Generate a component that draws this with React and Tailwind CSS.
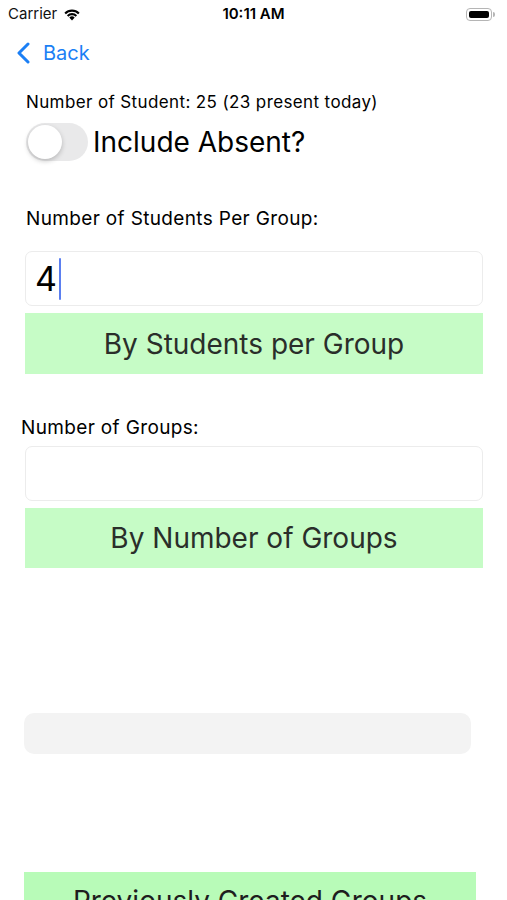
import React from "react";

function Wifi() {
  return (
    <svg width="18" height="13" viewBox="0 0 18 13" className="ml-[6px]">
      <path d="M9 12.5 L6.3 9.6 A3.9 3.9 0 0 1 11.7 9.6 Z" fill="#000" />
      <path d="M3.9 7.2 A7.3 7.3 0 0 1 14.1 7.2 L12.6 8.7 A5.2 5.2 0 0 0 5.4 8.7 Z" fill="#000" />
      <path d="M1.4 4.7 A10.8 10.8 0 0 1 16.6 4.7 L15.1 6.2 A8.7 8.7 0 0 0 2.9 6.2 Z" fill="#000" />
    </svg>
  );
}

function Battery() {
  return (
    <div className="flex items-center">
      <div className="w-[26px] h-[13px] rounded-[4px] border border-[#b5b5b5] p-[2px]">
        <div className="w-full h-full rounded-[2px] bg-black" />
      </div>
      <div className="w-[2px] h-[5px] rounded-r-sm bg-[#b5b5b5] ml-px" />
    </div>
  );
}

export default function App() {
  return (
    <div
      className="w-[507px] h-[900px] bg-white overflow-hidden text-black"
      style={{ fontFamily: "Inter, 'Liberation Sans', sans-serif" }}
    >
      <div className="grid grid-cols-3 items-center h-[28px] px-[8px] leading-[20px]">
        <div className="flex items-center text-[15px] text-[#111]">
          Carrier
          <Wifi />
        </div>
        <div className="text-center text-[15px] font-semibold">10:11 AM</div>
        <div className="flex justify-end pr-[4px]">
          <Battery />
        </div>
      </div>

      <div className="flex items-center h-[50px] pl-[16px] text-[#1b7ff5]">
        <svg width="14" height="22" viewBox="0 0 14 22">
          <path d="M12 2 L3 11 L12 20" stroke="#1b7ff5" strokeWidth="3" fill="none" strokeLinecap="round" strokeLinejoin="round" />
        </svg>
        <span className="ml-[13px] text-[20px]">Back</span>
      </div>

      <div className="flex flex-col pl-[25px] pr-[24px]">
        <div className="mt-[14px] ml-px text-[17px] tracking-[0.38px] leading-[20px]">
          Number of Student: 25 (23 present today)
        </div>
        <div className="mt-[11px] flex items-center h-[38px] shrink-0">
          <div className="w-[62px] h-[38px] rounded-full bg-[#e9e9ea] p-[2px] ml-px">
            <div className="w-[34px] h-[34px] rounded-full bg-white shadow-[0_2px_5px_rgba(0,0,0,0.22)]" />
          </div>
          <span className="ml-[5px] text-[28px] leading-[34px]">Include Absent?</span>
        </div>

        <div className="mt-[47px] ml-px text-[19px] tracking-[0.35px] leading-[22px]">
          Number of Students Per Group:
        </div>
        <div className="mt-[21px] h-[55px] shrink-0 rounded-[7px] border border-[#ececec] flex items-center pl-[9px]">
          <span className="text-[34px] leading-none">4</span>
          <span className="ml-[2px] w-[2px] h-[42px] bg-[#5b7ff0] rounded-full" />
        </div>
        <button className="mt-[7px] h-[61px] shrink-0 bg-[#c6fcc6] text-[#2a2e2a] text-[28px] flex items-center justify-center">
          By Students per Group
        </button>

        <div className="mt-[43px] -ml-[4px] text-[19px] tracking-[0.35px] leading-[22px]">Number of Groups:</div>
        <div className="mt-[7px] h-[55px] shrink-0 rounded-[7px] border border-[#ececec]" />
        <button className="mt-[7px] h-[60px] shrink-0 bg-[#c6fcc6] text-[#2a2e2a] text-[28px] flex items-center justify-center">
          By Number of Groups
        </button>

        <div className="mt-[145px] -ml-px w-[447px] h-[41px] shrink-0 rounded-[10px] bg-[#f3f3f3]" />

        <button className="mt-[118px] -ml-px w-[452px] h-[60px] shrink-0 bg-[#b8fbb8] text-[#1e1e1e] text-[28px] flex items-start justify-center pt-[8px]">
          Previously Created Groups
        </button>
      </div>
    </div>
  );
}
